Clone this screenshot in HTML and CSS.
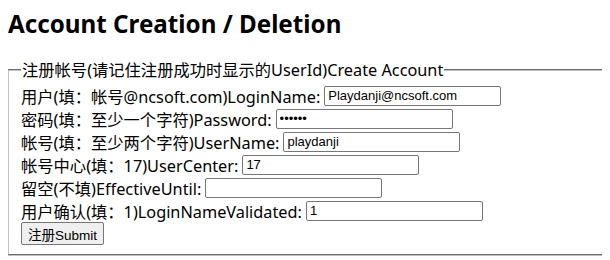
FILE: index.html
```html
<!DOCTYPE html>
<html lang="zh">

<head>
    <meta charset="UTF-8">
    <title>Account Creation / Deletion</title>
    <link rel="stylesheet" href="styles.css">
</head>

<body>
    <h1>Account Creation / Deletion</h1>

    <form id="createForm">
        <fieldset>
            <legend>注册帐号(请记住注册成功时显示的UserId)Create Account</legend>
            <div class="row">
                <label for="loginName">用户(填：帐号@ncsoft.com)LoginName:</label>
                <input type="text" id="loginName" value="Playdanji@ncsoft.com">
            </div>
            <div class="row">
                <label for="password">密码(填：至少一个字符)Password:</label>
                <input type="password" id="password" value="123456">
            </div>
            <div class="row">
                <label for="userName">帐号(填：至少两个字符)UserName:</label>
                <input type="text" id="userName" value="playdanji">
            </div>
            <div class="row">
                <label for="userCenter">帐号中心(填：17)UserCenter:</label>
                <input type="text" id="userCenter" value="17">
            </div>
            <div class="row">
                <label for="effectiveUntil">留空(不填)EffectiveUntil:</label>
                <input type="text" id="effectiveUntil" value="">
            </div>
            <div class="row">
                <label for="validated">用户确认(填：1)LoginNameValidated:</label>
                <input type="text" id="validated" value="1">
            </div>
            <div class="row">
                <button type="submit">注册Submit</button>
            </div>
        </fieldset>
    </form>
</body>

</html>
```

FILE: styles.css
```css
html {
    overflow: hidden;
}

body {
    margin: 8px;
    font-family: "Noto Sans", "Noto Sans CJK SC", sans-serif;
    font-size: 16.3px;
    color: #000;
    background-color: #fff;
}

h1 {
    margin: 0 0 20px 0;
    font-size: 24.2px;
    line-height: 32px;
    font-weight: bold;
}

fieldset {
    width: 640px;
    margin: 0 0 0 -1px;
    padding: 4px 12px 9px 12px;
    border: 2px groove #c0c0c0;
}

legend {
    padding: 0 1px;
    line-height: 20px;
}

.row {
    display: flex;
    align-items: center;
    gap: 4px;
    height: 23px;
}

.row input {
    width: 177px;
    height: 20px;
    box-sizing: border-box;
    padding: 1px 3px;
    border: 1px solid #767676;
    border-radius: 2px;
    font-family: "Liberation Sans", Arial, sans-serif;
    font-size: 13px;
}

.row button {
    height: 23px;
    padding: 0 6px;
    border: 1px solid #767676;
    border-radius: 2px;
    background-color: #efefef;
    font-family: "Liberation Sans", "Noto Sans CJK SC", sans-serif;
    font-size: 13.5px;
}
```
